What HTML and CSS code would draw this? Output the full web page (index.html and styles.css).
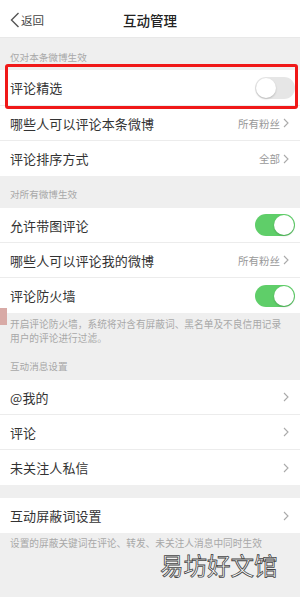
FILE: index.html
```html
<!DOCTYPE html>
<html lang="zh">
<head>
<meta charset="utf-8">
<link rel="stylesheet" href="styles.css">
</head>
<body>
<div class="page">
  <header class="nav">
    <div class="back">
      <svg class="back-icon" width="10" height="16" viewBox="0 0 10 16"><polyline points="8.5,1 1.5,8 8.5,15" fill="none" stroke="#555" stroke-width="1.4"/></svg>
      <span>返回</span>
    </div>
    <div class="title">互动管理</div>
  </header>

  <div class="band band-first">仅对本条微博生效</div>
  <div class="group">
    <div class="row row-tall"><span class="label">评论精选</span><span class="switch off"><i></i></span></div>
    <div class="row"><span class="label">哪些人可以评论本条微博</span><span class="value">所有粉丝<svg class="chev" width="6" height="10" viewBox="0 0 6 10"><polyline points="1,1 5,5 1,9" fill="none" stroke="#aaa" stroke-width="1.1"/></svg></span></div>
    <div class="row last"><span class="label">评论排序方式</span><span class="value">全部<svg class="chev" width="6" height="10" viewBox="0 0 6 10"><polyline points="1,1 5,5 1,9" fill="none" stroke="#aaa" stroke-width="1.1"/></svg></span></div>
  </div>

  <div class="band band-second">对所有微博生效</div>
  <div class="group">
    <div class="row"><span class="label">允许带图评论</span><span class="switch on"><i></i></span></div>
    <div class="row"><span class="label">哪些人可以评论我的微博</span><span class="value">所有粉丝<svg class="chev" width="6" height="10" viewBox="0 0 6 10"><polyline points="1,1 5,5 1,9" fill="none" stroke="#aaa" stroke-width="1.1"/></svg></span></div>
    <div class="row last"><span class="label">评论防火墙</span><span class="switch on"><i></i></span></div>
  </div>

  <div class="note-block">
    <p class="note">开启评论防火墙，系统将对含有屏蔽词、黑名单及不良信用记录用户的评论进行过滤。</p>
    <p class="band-label">互动消息设置</p>
  </div>
  <div class="group">
    <div class="row"><span class="label">@我的</span><span class="value"><svg class="chev" width="6" height="10" viewBox="0 0 6 10"><polyline points="1,1 5,5 1,9" fill="none" stroke="#aaa" stroke-width="1.1"/></svg></span></div>
    <div class="row"><span class="label">评论</span><span class="value"><svg class="chev" width="6" height="10" viewBox="0 0 6 10"><polyline points="1,1 5,5 1,9" fill="none" stroke="#aaa" stroke-width="1.1"/></svg></span></div>
    <div class="row last"><span class="label">未关注人私信</span><span class="value"><svg class="chev" width="6" height="10" viewBox="0 0 6 10"><polyline points="1,1 5,5 1,9" fill="none" stroke="#aaa" stroke-width="1.1"/></svg></span></div>
  </div>

  <div class="gap"></div>
  <div class="group">
    <div class="row last"><span class="label">互动屏蔽词设置</span><span class="value"><svg class="chev" width="6" height="10" viewBox="0 0 6 10"><polyline points="1,1 5,5 1,9" fill="none" stroke="#aaa" stroke-width="1.1"/></svg></span></div>
  </div>
  <div class="tail">
    <p class="note">设置的屏蔽关键词在评论、转发、未关注人消息中同时生效</p>
  </div>

  <div class="highlight"></div>
  <div class="float-tab"></div>
  <div class="watermark">易坊好文馆</div>
</div>
</body>
</html>
```

FILE: styles.css
```css
* { box-sizing: border-box; margin: 0; padding: 0; }
html, body { background: #fff; }
body {
  width: 308px;
  height: 597px;
  overflow: hidden;
  font-family: "Noto Sans CJK SC", "Noto Sans", sans-serif;
  color: #333;
}
.page {
  position: relative;
  width: 300px;
  height: 597px;
  display: flex;
  flex-direction: column;
  background: #efefef;
}
.nav {
  position: relative;
  height: 38px;
  background: #fff;
  display: flex;
  align-items: center;
  justify-content: center;
  border-bottom: 1px solid #e8e8e8;
}
.back {
  position: absolute;
  left: 10px;
  top: 12px;
  display: flex;
  align-items: center;
  gap: 1px;
  font-size: 11.5px;
  color: #444;
  line-height: 16px;
}
.back-icon { display: block; }
.title {
  font-size: 13.5px;
  font-weight: 500;
  color: #222;
  padding-top: 2px;
}
.band {
  height: 32px;
  display: flex;
  align-items: center;
  padding-left: 10px;
  font-size: 9.6px;
  color: #a8a8a8;
}
.band-first { padding-top: 6px; }
.band-second { padding-top: 4px; }
.group { background: #fff; }
.row {
  height: 35px;
  display: flex;
  align-items: center;
  justify-content: space-between;
  padding: 0 6px 0 10px;
  border-bottom: 1px solid #ececec;
}
.row.last { border-bottom: none; }
.row-tall { height: 36px; }
.label {
  font-size: 13px;
  color: #333;
  letter-spacing: 0.1px;
}
.value {
  display: flex;
  align-items: center;
  gap: 3px;
  font-size: 10.5px;
  color: #999;
  padding-right: 5px;
}
.chev { display: block; }
.switch {
  position: relative;
  width: 40px;
  height: 22px;
  border-radius: 11px;
  margin-right: -1px;
}
.switch i {
  position: absolute;
  top: 1px;
  width: 20px;
  height: 20px;
  border-radius: 50%;
  background: #fff;
  box-shadow: 0 1px 2px rgba(0,0,0,0.2);
}
.switch.off { background: #e6e6e6; }
.switch.off i { left: 1px; }
.switch.on { background: #5fce69; }
.switch.on i { right: 1px; }
.note-block {
  height: 67px;
  padding: 4px 10px 0 10px;
}
.note {
  font-size: 9.7px;
  line-height: 14px;
  color: #a8a8a8;
}
.band-label {
  margin-top: 14px;
  font-size: 9.6px;
  line-height: 14px;
  color: #a8a8a8;
}
.gap { height: 13px; }
.tail {
  flex: 1;
  padding: 3px 10px 0 10px;
}
.highlight {
  position: absolute;
  left: 5px;
  top: 64px;
  width: 293px;
  height: 45px;
  border: 3px solid #f01818;
  border-radius: 3px;
}
.float-tab {
  position: absolute;
  left: 0;
  top: 308px;
  width: 7px;
  height: 17px;
  background: #d8aaa6;
}
.watermark {
  position: absolute;
  left: 160px;
  top: 550px;
  font-size: 23.5px;
  line-height: 30px;
  color: #fff;
  -webkit-text-stroke: 0.8px #444;
  letter-spacing: 0px;
}
```
